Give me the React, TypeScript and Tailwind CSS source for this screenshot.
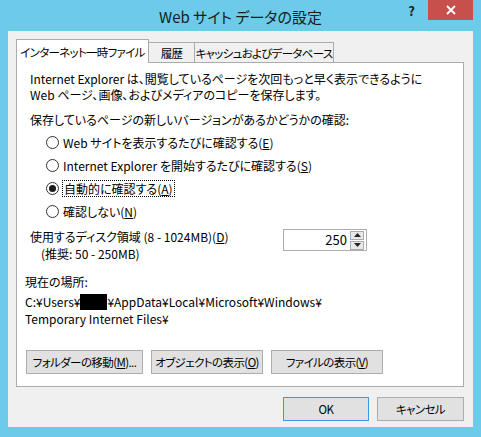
import { ReactNode } from "react"

const Radio = ({ checked, children, focus }: { checked?: boolean; children: ReactNode; focus?: boolean }) => (
  <div className="flex h-[23px] items-center pl-[16px]">
    <span className="flex h-[13px] w-[13px] items-center justify-center rounded-full border border-[#333333] bg-white">
      {checked && <span className="h-[7px] w-[7px] rounded-full bg-[#1a1a1a]" />}
    </span>
    <span className={focus ? "ml-[3px] border border-dotted border-black px-px leading-[15px]" : "ml-[4px]"}>{children}</span>
  </div>
)

const Btn = ({ children, w, primary }: { children: ReactNode; w: string; primary?: boolean }) => (
  <button
    className={`${w} flex h-[24px] items-center justify-center whitespace-nowrap border bg-[#e1e1e1] text-[11.5px] tracking-[-0.6px] text-black ${
      primary ? "border-[#3c98e6]" : "border-[#adadad]"
    }`}
  >
    {children}
  </button>
)

export default function App() {
  return (
    <div className="flex h-[437px] w-[481px] flex-col bg-[#6ccbe9] font-['Noto_Sans_CJK_JP',sans-serif] text-[12px] leading-[16px] text-black [font-feature-settings:'palt']">
      {/* title bar */}
      <div className="relative flex h-[31px] items-center justify-center">
        <span className="pt-[2px] text-[15px] text-[#1b1b1b]">Web サイト データの設定</span>
        <span className="absolute top-[3px] right-[66px] text-[13px] font-bold text-[#222]">?</span>
        <div className="absolute top-0 right-[8px] flex h-[20px] w-[45px] items-center justify-center bg-[#c7504d]">
          <svg width="10" height="10" viewBox="0 0 10 10">
            <path d="M1 1 L9 9 M9 1 L1 9" stroke="white" strokeWidth="1.8" />
          </svg>
        </div>
      </div>

      {/* client */}
      <div className="mx-[8px] mb-[10px] flex flex-1 flex-col bg-[#f0f0f0] pt-[8px] pr-[9px] pl-[8px]">
        <div className="flex items-end whitespace-nowrap text-[11.5px] tracking-[-0.7px]">
          <div className="relative z-10 -mb-px flex h-[24px] w-[133px] shrink-0 items-center justify-center border border-b-0 border-[#acacac] bg-white">
            インターネット一時ファイル
          </div>
          <div className="flex h-[20px] w-[46px] shrink-0 items-center justify-center border border-l-0 border-b-0 border-[#acacac] bg-[#f0f0f0]">
            履歴
          </div>
          <div className="flex h-[20px] w-[139px] shrink-0 items-center justify-center border border-l-0 border-b-0 border-[#acacac] bg-[#f0f0f0]">
            キャッシュおよびデータベース
          </div>
        </div>

        <div className="flex h-[325px] flex-col border border-[#acacac] bg-white px-[8px] pt-[8px]">
          <div className="pl-[5px]">
            <p>Internet Explorer は、閲覧しているページを次回もっと早く表示できるように</p>
            <p>Web ページ、画像、およびメディアのコピーを保存します。</p>
            <p className="mt-[9px]">保存しているページの新しいバージョンがあるかどうかの確認:</p>
            <div className="mt-[3px]">
              <Radio>
                Web サイトを表示するたびに確認する(<u>E</u>)
              </Radio>
              <Radio>
                Internet Explorer を開始するたびに確認する(<u>S</u>)
              </Radio>
              <Radio checked focus>
                自動的に確認する(<u>A</u>)
              </Radio>
              <Radio>
                確認しない(<u>N</u>)
              </Radio>
            </div>
            <div className="mt-[6px] flex">
              <div className="w-[253px]">
                <p>
                  使用するディスク領域 (8 - 1024MB)(<u>D</u>)
                </p>
                <p className="pl-[11px] pt-[1px]">(推奨: 50 - 250MB)</p>
              </div>
              <div className="flex h-[22px] w-[84px] items-center border border-[#abadb3] bg-white">
                <span className="flex-1 pr-[3px] text-right text-[13px]">250</span>
                <div className="mr-[2px] flex flex-col gap-px">
                  <span className="flex h-[9px] w-[14px] items-center justify-center border border-[#acacac] bg-[#e8e8e8]">
                    <svg width="7" height="4" viewBox="0 0 7 4">
                      <path d="M0 4 L3.5 0 L7 4 Z" fill="#222" />
                    </svg>
                  </span>
                  <span className="flex h-[9px] w-[14px] items-center justify-center border border-[#acacac] bg-[#e8e8e8]">
                    <svg width="7" height="4" viewBox="0 0 7 4">
                      <path d="M0 0 L3.5 4 L7 0 Z" fill="#222" />
                    </svg>
                  </span>
                </div>
              </div>
            </div>
          </div>

          <p className="mt-[12px]">現在の場所:</p>
          <p className="mt-[4px] flex items-center">
            C:¥Users¥<span className="inline-block h-[16px] w-[27px] bg-black" />¥AppData¥Local¥Microsoft¥Windows¥
          </p>
          <p className="leading-[17px]">Temporary Internet Files¥</p>

          <div className="mt-[23px] flex gap-[8px] pl-px">
            <Btn w="w-[117px]">
              フォルダーの移動(<u>M</u>)...
            </Btn>
            <Btn w="w-[112px]">
              オブジェクトの表示(<u>O</u>)
            </Btn>
            <Btn w="w-[112px]">
              ファイルの表示(<u>V</u>)
            </Btn>
          </div>
        </div>

        <div className="mt-[10px] flex justify-end gap-[8px]">
          <Btn w="w-[86px]" primary>
            OK
          </Btn>
          <Btn w="w-[87px]">キャンセル</Btn>
        </div>
      </div>
    </div>
  )
}
